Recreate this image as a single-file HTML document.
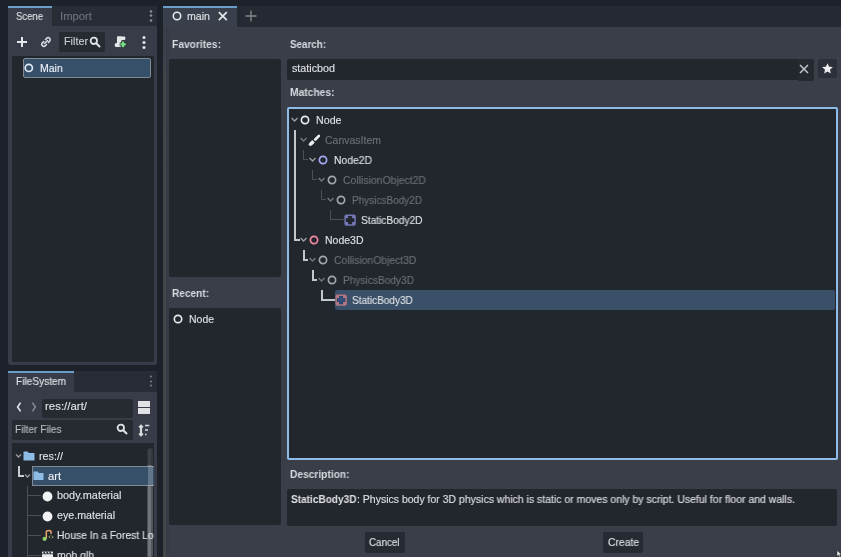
<!DOCTYPE html>
<html><head><meta charset="utf-8"><style>
html,body{margin:0;padding:0;}
body{width:841px;height:557px;overflow:hidden;position:relative;background:#1d2129;font-family:"Liberation Sans",sans-serif;}
body>div,body>svg{position:absolute;}
body>div{will-change:transform;}
</style></head><body>
<div style="left:8px;top:6px;width:149px;height:21px;background:#282c34;"></div>
<div style="left:8px;top:6px;width:44px;height:21px;background:#373c48;"></div>
<div style="left:8px;top:6px;width:44px;height:2px;background:#6c9fc8;"></div>
<div style="left:16px;top:7.86px;font-size:10.5px;line-height:17px;color:#dfe1e5;transform:scaleX(0.9069);transform-origin:0 0;white-space:pre;-webkit-text-stroke:0.12px #dfe1e5;">Scene</div>
<div style="left:59.7px;top:7.86px;font-size:10.5px;line-height:17px;color:#6e737b;transform:scaleX(1.0755);transform-origin:0 0;white-space:pre;-webkit-text-stroke:0.12px #6e737b;">Import</div>
<svg style="left:149px;top:9.7px;" width="4" height="4" viewBox="0 0 4 4"><circle cx="2" cy="1.5" r="1.3" fill="#8a8e95"/></svg>
<svg style="left:149px;top:14.3px;" width="4" height="4" viewBox="0 0 4 4"><circle cx="2" cy="1.5" r="1.3" fill="#8a8e95"/></svg>
<svg style="left:149px;top:18.9px;" width="4" height="4" viewBox="0 0 4 4"><circle cx="2" cy="1.5" r="1.3" fill="#8a8e95"/></svg>
<div style="left:8px;top:26px;width:149px;height:339px;background:#373c48;border-radius:0 0 3px 3px;"></div>
<svg style="left:16px;top:36px;" width="12" height="12" viewBox="0 0 12 12"><path d="M6 1v10M1 6h10" stroke="#e6e8eb" stroke-width="2"/></svg>
<svg style="left:40px;top:36px;" width="12" height="12" viewBox="0 0 12 12"><path d="M5.5 3.5l1.2-1.2a2 2 0 0 1 2.9 2.9L8.4 6.4M6.5 8.5L5.3 9.7a2 2 0 0 1-2.9-2.9L3.6 5.6M4.5 7.5l3-3" stroke="#e0e2e6" stroke-width="1.5" fill="none" stroke-linecap="round"/></svg>
<div style="left:59px;top:32px;width:46px;height:20px;background:#262a31;border-radius:2px;"></div>
<div style="left:63.5px;top:33.36px;font-size:10.5px;line-height:17px;color:#c9ccd0;transform:scaleX(1.0287);transform-origin:0 0;white-space:pre;-webkit-text-stroke:0.12px #c9ccd0;">Filter</div>
<svg style="left:89px;top:36px;" width="12" height="12" viewBox="0 0 12 12"><circle cx="4.8" cy="4.8" r="3.2" stroke="#e0e2e6" stroke-width="1.8" fill="none"/><path d="M7.2 7.2l3.3 3.3" stroke="#e0e2e6" stroke-width="2" stroke-linecap="round"/></svg>
<svg style="left:113px;top:34px;" width="16" height="16" viewBox="0 0 16 16"><rect x="4" y="2.5" width="8.4" height="3.6" rx="1.3" fill="#e6e8eb"/><rect x="4" y="2.5" width="4.6" height="10.5" fill="#e6e8eb"/><rect x="1.8" y="9" width="6.6" height="4" rx="1.6" fill="#e6e8eb"/><path d="M10.1 7v6.8M6.7 10.4h6.8" stroke="#1e3326" stroke-width="3.6"/><path d="M10.1 7.6v5.6M7.3 10.4h5.6" stroke="#79dc8a" stroke-width="2.2"/></svg>
<svg style="left:142px;top:35.7px;" width="4" height="4" viewBox="0 0 4 4"><circle cx="2" cy="1.5" r="1.5" fill="#e6e8eb"/></svg>
<svg style="left:142px;top:40.7px;" width="4" height="4" viewBox="0 0 4 4"><circle cx="2" cy="1.5" r="1.5" fill="#e6e8eb"/></svg>
<svg style="left:142px;top:45.7px;" width="4" height="4" viewBox="0 0 4 4"><circle cx="2" cy="1.5" r="1.5" fill="#e6e8eb"/></svg>
<div style="left:12px;top:56px;width:142px;height:306px;background:#22262d;border-radius:2px;"></div>
<div style="left:23px;top:58px;width:128px;height:20px;background:#37506a;border:1px solid #808a96;box-sizing:border-box;border-radius:2px;"></div>
<svg style="left:24px;top:63px;" width="10" height="10" viewBox="0 0 10 10"><circle cx="4.8" cy="4.9" r="3.6" stroke="#dce8f3" stroke-width="1.7" fill="none"/></svg>
<div style="left:39.6px;top:59.86px;font-size:10.5px;line-height:17px;color:#f0f4fa;transform:scaleX(0.9931);transform-origin:0 0;white-space:pre;-webkit-text-stroke:0.12px #f0f4fa;">Main</div>
<div style="left:8px;top:371px;width:149px;height:21px;background:#282c34;"></div>
<div style="left:8px;top:371px;width:66px;height:21px;background:#373c48;"></div>
<div style="left:8px;top:371px;width:66px;height:2px;background:#6c9fc8;"></div>
<div style="left:16px;top:373.36px;font-size:10.5px;line-height:17px;color:#dfe1e5;transform:scaleX(0.9629);transform-origin:0 0;white-space:pre;-webkit-text-stroke:0.12px #dfe1e5;">FileSystem</div>
<svg style="left:149px;top:375.1px;" width="4" height="4" viewBox="0 0 4 4"><circle cx="2" cy="1.5" r="1.1" fill="#767a81"/></svg>
<svg style="left:149px;top:379.6px;" width="4" height="4" viewBox="0 0 4 4"><circle cx="2" cy="1.5" r="1.1" fill="#767a81"/></svg>
<svg style="left:149px;top:384.3px;" width="4" height="4" viewBox="0 0 4 4"><circle cx="2" cy="1.5" r="1.1" fill="#767a81"/></svg>
<div style="left:8px;top:392px;width:149px;height:165px;background:#373c48;"></div>
<svg style="left:14px;top:400px;" width="10" height="14" viewBox="0 0 10 14"><path d="M6.6 2.6L3.6 7l3 4.4" stroke="#e6e8eb" stroke-width="1.6" fill="none"/></svg>
<svg style="left:29px;top:400px;" width="10" height="14" viewBox="0 0 10 14"><path d="M3.4 2.6L6.4 7l-3 4.4" stroke="#8a8e95" stroke-width="1.4" fill="none"/></svg>
<div style="left:42px;top:398.5px;width:91px;height:18.5px;background:#262a31;border-radius:2px;"></div>
<div style="left:45px;top:398.36px;font-size:10.5px;line-height:17px;color:#dfe1e5;transform:scaleX(1.0908);transform-origin:0 0;white-space:pre;-webkit-text-stroke:0.12px #dfe1e5;">res://art/</div>
<div style="left:138px;top:401px;width:12px;height:5.5px;background:#e0e2e6;"></div>
<div style="left:138px;top:408px;width:12px;height:5.5px;background:#e0e2e6;"></div>
<div style="left:12px;top:420px;width:121px;height:20px;background:#262a31;border-radius:2px;"></div>
<div style="left:15px;top:420.86px;font-size:10.5px;line-height:17px;color:#b8bbc0;transform:scaleX(0.9604);transform-origin:0 0;white-space:pre;-webkit-text-stroke:0.12px #b8bbc0;">Filter Files</div>
<svg style="left:116px;top:423px;" width="12" height="12" viewBox="0 0 12 12"><circle cx="4.8" cy="4.8" r="3.2" stroke="#e0e2e6" stroke-width="1.8" fill="none"/><path d="M7.2 7.2l3.3 3.3" stroke="#e0e2e6" stroke-width="2" stroke-linecap="round"/></svg>
<svg style="left:137px;top:422px;" width="14" height="16" viewBox="0 0 14 16"><path d="M4 4.2v8.6" stroke="#d8dadf" stroke-width="2.2"/><path d="M2.1 5.4L4 3.4 5.9 5.4M2.1 11.6L4 13.6 5.9 11.6" stroke="#d8dadf" stroke-width="1.7" fill="none"/><path d="M8 3.5h4.3M8 8h3M8 12.5h1.5" stroke="#d8dadf" stroke-width="1.4"/></svg>
<div style="left:12px;top:443px;width:142px;height:114px;background:#22262d;"></div>
<div style="left:147px;top:449px;width:4px;height:108px;background:#2c3038;"></div>
<div style="left:147px;top:465px;width:4px;height:92px;background:#4a4f57;"></div>
<svg style="left:15px;top:453px;" width="7" height="6" viewBox="0 0 7 6"><path d="M1 1.5l2.5 2.5 2.5-2.5" stroke="#9a9ea4" stroke-width="1.3" fill="none"/></svg>
<svg style="left:23px;top:450px;" width="12" height="11" viewBox="0 0 12 11"><path d="M0.5 1.5h4l1.5 1.5h5.5v7.5h-11z" fill="#8dbde6"/></svg>
<div style="left:39px;top:447.86px;font-size:10.5px;line-height:17px;color:#dfe1e5;transform:scaleX(1.0284);transform-origin:0 0;white-space:pre;-webkit-text-stroke:0.12px #dfe1e5;">res://</div>
<div style="left:32px;top:466px;width:122px;height:20px;background:#37506a;border:1px solid #808a96;border-right:none;box-sizing:border-box;"></div>
<div style="left:18px;top:466px;width:2px;height:11px;background:#c8cbd0;"></div>
<div style="left:18px;top:475px;width:5.5px;height:2px;background:#c8cbd0;"></div>
<svg style="left:24px;top:473px;" width="7" height="6" viewBox="0 0 7 6"><path d="M1 1.5l2.5 2.5 2.5-2.5" stroke="#9a9ea4" stroke-width="1.3" fill="none"/></svg>
<svg style="left:33px;top:470px;" width="11" height="11" viewBox="0 0 11 11"><path d="M0.5 1.5h4l1.5 1.5h4.5v7h-10z" fill="#8dbde6"/></svg>
<div style="left:48px;top:467.86px;font-size:10.5px;line-height:17px;color:#eef2f6;transform:scaleX(1.0610);transform-origin:0 0;white-space:pre;-webkit-text-stroke:0.12px #eef2f6;">art</div>
<div style="left:27px;top:486px;width:1px;height:71px;background:#4a4e55;"></div>
<div style="left:28px;top:495px;width:13px;height:1px;background:#4a4e55;"></div>
<svg style="left:42px;top:490.6px;" width="11" height="11" viewBox="0 0 11 11"><circle cx="5.5" cy="5.5" r="4.9" fill="#f2f3f5"/></svg>
<div style="left:57px;top:487.46px;font-size:10.5px;line-height:17px;color:#dfe1e5;transform:scaleX(1.0362);transform-origin:0 0;white-space:pre;-webkit-text-stroke:0.12px #dfe1e5;">body.material</div>
<div style="left:28px;top:515px;width:13px;height:1px;background:#4a4e55;"></div>
<svg style="left:42px;top:510.6px;" width="11" height="11" viewBox="0 0 11 11"><circle cx="5.5" cy="5.5" r="4.9" fill="#f2f3f5"/></svg>
<div style="left:57px;top:507.46px;font-size:10.5px;line-height:17px;color:#dfe1e5;transform:scaleX(1.0142);transform-origin:0 0;white-space:pre;-webkit-text-stroke:0.12px #dfe1e5;">eye.material</div>
<div style="left:28px;top:535px;width:13px;height:1px;background:#4a4e55;"></div>
<svg style="left:42px;top:528.5px;" width="12" height="12" viewBox="0 0 12 12"><path d="M4.3 9.5V2.3c1.5-.9 3.2-.9 4.6-.2l.3 2.8" stroke="#eda56e" stroke-width="1.5" fill="none"/><circle cx="2.6" cy="9.8" r="2.1" fill="#8fd46a"/><path d="M8.2 6.6l-1.3 1.3 1.3 1.3M9.8 6.6l1.3 1.3-1.3 1.3" stroke="#a6c47a" stroke-width="0.9" fill="none"/></svg>
<div style="left:57px;top:527.36px;font-size:10.5px;line-height:17px;color:#dfe1e5;transform:scaleX(0.9842);transform-origin:0 0;white-space:pre;-webkit-text-stroke:0.12px #dfe1e5;">House In a Forest Lo</div>
<div style="left:28px;top:555px;width:13px;height:1px;background:#4a4e55;"></div>
<svg style="left:42px;top:551.4px;" width="12" height="12" viewBox="0 0 12 12"><rect x="0" y="0.6" width="11" height="10" fill="#e6e8eb"/><path d="M1.5 0.6l1.5 2M4.5 0.6l1.5 2M7.5 0.6l1.5 2" stroke="#22262d" stroke-width="1.2"/><path d="M0 2.8h11" stroke="#22262d" stroke-width="0.8"/></svg>
<div style="left:57px;top:547.26px;font-size:10.5px;line-height:17px;color:#dfe1e5;transform:scaleX(0.9906);transform-origin:0 0;white-space:pre;-webkit-text-stroke:0.12px #dfe1e5;">mob.glb</div>
<div style="left:154px;top:443px;width:3px;height:114px;background:#373c48;"></div>
<div style="left:147.5px;top:448px;width:4.5px;height:17px;background:rgba(255,255,255,0.08);border-radius:2px 2px 0 0;"></div>
<div style="left:147.5px;top:465px;width:4.5px;height:92px;background:rgba(255,255,255,0.22);border-radius:2px;"></div>
<div style="left:157px;top:0px;width:6px;height:557px;background:#1d2129;"></div>
<div style="left:163px;top:6px;width:678px;height:21px;background:#252a32;"></div>
<div style="left:163px;top:6px;width:74px;height:21px;background:#3a404b;"></div>
<div style="left:163px;top:6px;width:74px;height:2px;background:#6c9fc8;"></div>
<svg style="left:171px;top:10px;" width="12" height="12" viewBox="0 0 12 12"><circle cx="6" cy="6" r="3.7" stroke="#e6e8eb" stroke-width="1.6" fill="none"/></svg>
<div style="left:186.5px;top:7.86px;font-size:10.5px;line-height:17px;color:#dfe1e5;transform:scaleX(1.0107);transform-origin:0 0;white-space:pre;-webkit-text-stroke:0.12px #dfe1e5;">main</div>
<svg style="left:217px;top:11px;" width="12" height="10" viewBox="0 0 12 10"><path d="M1.8 1.2l8 8M9.8 1.2l-8 8" stroke="#e6e8eb" stroke-width="1.7"/></svg>
<svg style="left:245px;top:10px;" width="12" height="12" viewBox="0 0 12 12"><path d="M6 0.5v11M0.5 6h11" stroke="#85898f" stroke-width="1.3"/></svg>
<div style="left:163px;top:27px;width:678px;height:530px;background:#393e49;"></div>
<div style="left:163px;top:50px;width:3px;height:507px;background:linear-gradient(#393e49,#40454a 20px,#42474a);"></div>
<div style="left:166px;top:27px;width:3px;height:530px;background:#373b47;"></div>
<div style="left:172px;top:36.16px;font-size:10.5px;line-height:17px;color:#d7dade;font-weight:bold;transform:scaleX(0.9765);transform-origin:0 0;white-space:pre;-webkit-text-stroke:0px #d7dade;">Favorites:</div>
<div style="left:169px;top:59px;width:112px;height:218px;background:#22262d;border-radius:2px;"></div>
<div style="left:172px;top:284.86px;font-size:10.5px;line-height:17px;color:#d7dade;font-weight:bold;transform:scaleX(0.9609);transform-origin:0 0;white-space:pre;-webkit-text-stroke:0px #d7dade;">Recent:</div>
<div style="left:169px;top:308px;width:112px;height:217px;background:#22262d;border-radius:2px;"></div>
<svg style="left:173px;top:314px;" width="10" height="10" viewBox="0 0 10 10"><circle cx="5" cy="5" r="3.7" stroke="#e6e8eb" stroke-width="1.7" fill="none"/></svg>
<div style="left:188.5px;top:310.86px;font-size:10.5px;line-height:17px;color:#dfe1e5;transform:scaleX(0.9960);transform-origin:0 0;white-space:pre;-webkit-text-stroke:0.12px #dfe1e5;">Node</div>
<div style="left:290px;top:36.16px;font-size:10.5px;line-height:17px;color:#d7dade;font-weight:bold;transform:scaleX(0.9347);transform-origin:0 0;white-space:pre;-webkit-text-stroke:0px #d7dade;">Search:</div>
<div style="left:287px;top:59px;width:526px;height:21px;background:#22262d;border-radius:2px;"></div>
<div style="left:291.5px;top:60.36px;font-size:10.5px;line-height:17px;color:#dfe1e5;transform:scaleX(1.0232);transform-origin:0 0;white-space:pre;-webkit-text-stroke:0.12px #dfe1e5;">staticbod</div>
<div style="left:797.5px;top:59px;width:15.5px;height:22px;background:#252930;border-radius:0 2px 2px 0;"></div>
<svg style="left:798.5px;top:64.3px;" width="10" height="10" viewBox="0 0 10 10"><path d="M1 1l8 8M9 1l-8 8" stroke="#c3c6cb" stroke-width="1.5"/></svg>
<div style="left:818px;top:59px;width:19px;height:19px;background:#2b2f37;border-radius:2px;"></div>
<svg style="left:821px;top:62px;" width="13" height="13" viewBox="0 0 13 13"><path d="M6.5 1.2l1.6 3.5 3.8.4-2.9 2.6.8 3.8-3.3-1.9-3.3 1.9.8-3.8L1.1 5.1l3.8-.4z" fill="#eceef1"/></svg>
<div style="left:290px;top:84.16px;font-size:10.5px;line-height:17px;color:#d7dade;font-weight:bold;transform:scaleX(0.9779);transform-origin:0 0;white-space:pre;-webkit-text-stroke:0px #d7dade;">Matches:</div>
<div style="left:287px;top:107px;width:551px;height:353px;background:#22262d;border:2px solid #8ebbe8;box-sizing:border-box;border-radius:2px;"></div>
<div style="left:290.2px;top:465.86px;font-size:10.5px;line-height:17px;color:#d7dade;font-weight:bold;transform:scaleX(0.9714);transform-origin:0 0;white-space:pre;-webkit-text-stroke:0px #d7dade;">Description:</div>
<div style="left:287px;top:489px;width:550px;height:36.5px;background:#22262d;border-radius:2px;"></div>
<div style="left:290.6px;top:490.86px;font-size:10.5px;line-height:17px;color:#dfe1e5;font-weight:bold;transform:scaleX(0.9595);transform-origin:0 0;white-space:pre;-webkit-text-stroke:0px #dfe1e5;">StaticBody3D</div>
<div style="left:356.5px;top:490.86px;font-size:10.5px;line-height:17px;color:#dfe1e5;transform:scaleX(0.9982);transform-origin:0 0;white-space:pre;-webkit-text-stroke:0.12px #dfe1e5;">: Physics body for 3D physics which is static or moves only by script. Useful for floor and walls.</div>
<div style="left:365px;top:532px;width:40px;height:20.5px;background:#262a32;border-radius:2px;"></div>
<div style="left:369px;top:533.86px;font-size:10.5px;line-height:17px;color:#dfe1e5;transform:scaleX(0.9332);transform-origin:0 0;white-space:pre;-webkit-text-stroke:0.12px #dfe1e5;">Cancel</div>
<div style="left:603px;top:532px;width:40px;height:20.5px;background:#262a32;border-radius:2px;"></div>
<div style="left:607.5px;top:533.86px;font-size:10.5px;line-height:17px;color:#dfe1e5;transform:scaleX(0.9837);transform-origin:0 0;white-space:pre;-webkit-text-stroke:0.12px #dfe1e5;">Create</div>
<div style="left:335px;top:290px;width:500px;height:20px;background:#3a5068;border-radius:2px;"></div>
<div style="left:294px;top:130px;width:2px;height:111px;background:#c3c6cb;"></div>
<div style="left:294px;top:239px;width:6px;height:2px;background:#c3c6cb;"></div>
<div style="left:303px;top:250px;width:2px;height:11px;background:#c3c6cb;"></div>
<div style="left:303px;top:259px;width:5px;height:2px;background:#c3c6cb;"></div>
<div style="left:312px;top:270px;width:2px;height:11px;background:#c3c6cb;"></div>
<div style="left:312px;top:279px;width:5px;height:2px;background:#c3c6cb;"></div>
<div style="left:321px;top:290px;width:2px;height:11px;background:#c3c6cb;"></div>
<div style="left:321px;top:299px;width:14px;height:2px;background:#c3c6cb;"></div>
<div style="left:303px;top:150px;width:1px;height:10px;background:#4b4f56;"></div>
<div style="left:303px;top:159px;width:5px;height:1px;background:#4b4f56;"></div>
<div style="left:312px;top:170px;width:1px;height:10px;background:#4b4f56;"></div>
<div style="left:312px;top:179px;width:5px;height:1px;background:#4b4f56;"></div>
<div style="left:321px;top:190px;width:1px;height:10px;background:#4b4f56;"></div>
<div style="left:321px;top:199px;width:5px;height:1px;background:#4b4f56;"></div>
<div style="left:330px;top:210px;width:1px;height:10px;background:#4b4f56;"></div>
<div style="left:330px;top:219px;width:14px;height:1px;background:#4b4f56;"></div>
<svg style="left:291px;top:117px;" width="8" height="7" viewBox="0 0 8 7"><path d="M0.6 1.0L3.55 4.1L6.5 1.0" stroke="#9a9ea4" stroke-width="1.4" fill="none"/></svg>
<svg style="left:299.8px;top:115px;" width="10" height="10" viewBox="0 0 10 10"><circle cx="5" cy="5" r="3.65" stroke="#e6e8eb" stroke-width="1.65" fill="none"/></svg>
<div style="left:316.0px;top:111.86px;font-size:10.5px;line-height:17px;color:#dfe1e5;transform:scaleX(1.0159);transform-origin:0 0;white-space:pre;-webkit-text-stroke:0.12px #dfe1e5;">Node</div>
<svg style="left:300px;top:137px;" width="8" height="7" viewBox="0 0 8 7"><path d="M0.6 1.0L3.55 4.1L6.5 1.0" stroke="#74787e" stroke-width="1.4" fill="none"/></svg>
<svg style="left:307.5px;top:134px;" width="12" height="12" viewBox="0 0 12 12"><path d="M10.9 1.9L7.3 5.5" stroke="#eceef1" stroke-width="2.7" stroke-linecap="round"/><path d="M5.5 7.3L2.6 10.2" stroke="#eceef1" stroke-width="3.5"/><circle cx="2.4" cy="10.3" r="1.6" fill="#eceef1"/></svg>
<div style="left:325.0px;top:131.86px;font-size:10.5px;line-height:17px;color:#6c7077;white-space:pre;-webkit-text-stroke:0.12px #6c7077;">CanvasItem</div>
<svg style="left:309px;top:157px;" width="8" height="7" viewBox="0 0 8 7"><path d="M0.6 1.0L3.55 4.1L6.5 1.0" stroke="#9a9ea4" stroke-width="1.4" fill="none"/></svg>
<svg style="left:318px;top:155px;" width="10" height="10" viewBox="0 0 10 10"><circle cx="5" cy="5" r="3.65" stroke="#a3aaf2" stroke-width="1.65" fill="none"/></svg>
<div style="left:334.1px;top:151.86px;font-size:10.5px;line-height:17px;color:#dfe1e5;transform:scaleX(0.9865);transform-origin:0 0;white-space:pre;-webkit-text-stroke:0.12px #dfe1e5;">Node2D</div>
<svg style="left:318px;top:177px;" width="8" height="7" viewBox="0 0 8 7"><path d="M0.6 1.0L3.55 4.1L6.5 1.0" stroke="#74787e" stroke-width="1.4" fill="none"/></svg>
<svg style="left:326.6px;top:175px;" width="10" height="10" viewBox="0 0 10 10"><circle cx="5" cy="5" r="3.65" stroke="#a3a6ab" stroke-width="1.65" fill="none"/></svg>
<div style="left:342.6px;top:171.86px;font-size:10.5px;line-height:17px;color:#6c7077;transform:scaleX(0.9946);transform-origin:0 0;white-space:pre;-webkit-text-stroke:0.12px #6c7077;">CollisionObject2D</div>
<svg style="left:327px;top:197px;" width="8" height="7" viewBox="0 0 8 7"><path d="M0.6 1.0L3.55 4.1L6.5 1.0" stroke="#74787e" stroke-width="1.4" fill="none"/></svg>
<svg style="left:335.7px;top:195px;" width="10" height="10" viewBox="0 0 10 10"><circle cx="5" cy="5" r="3.65" stroke="#a3a6ab" stroke-width="1.65" fill="none"/></svg>
<div style="left:352.0px;top:191.86px;font-size:10.5px;line-height:17px;color:#6c7077;transform:scaleX(0.9520);transform-origin:0 0;white-space:pre;-webkit-text-stroke:0.12px #6c7077;">PhysicsBody2D</div>
<svg style="left:344.2px;top:214px;" width="12" height="12" viewBox="0 0 12 12"><rect x="0.4" y="0.4" width="11.4" height="11.4" rx="2" fill="#7279b6"/><path d="M1.9 4.2h8.4v3.8H1.9zM4.1 1.9h4v8.4h-4z" fill="#22262d"/></svg>
<div style="left:360.6px;top:211.86px;font-size:10.5px;line-height:17px;color:#dfe1e5;transform:scaleX(0.9668);transform-origin:0 0;white-space:pre;-webkit-text-stroke:0.12px #dfe1e5;">StaticBody2D</div>
<svg style="left:300px;top:237px;" width="8" height="7" viewBox="0 0 8 7"><path d="M0.6 1.0L3.55 4.1L6.5 1.0" stroke="#9a9ea4" stroke-width="1.4" fill="none"/></svg>
<svg style="left:309px;top:235px;" width="10" height="10" viewBox="0 0 10 10"><circle cx="5" cy="5" r="3.65" stroke="#f08aa2" stroke-width="1.65" fill="none"/></svg>
<div style="left:325.0px;top:231.86px;font-size:10.5px;line-height:17px;color:#dfe1e5;white-space:pre;-webkit-text-stroke:0.12px #dfe1e5;">Node3D</div>
<svg style="left:309px;top:257px;" width="8" height="7" viewBox="0 0 8 7"><path d="M0.6 1.0L3.55 4.1L6.5 1.0" stroke="#74787e" stroke-width="1.4" fill="none"/></svg>
<svg style="left:318px;top:255px;" width="10" height="10" viewBox="0 0 10 10"><circle cx="5" cy="5" r="3.65" stroke="#a3a6ab" stroke-width="1.65" fill="none"/></svg>
<div style="left:334.1px;top:251.86px;font-size:10.5px;line-height:17px;color:#6c7077;transform:scaleX(0.9886);transform-origin:0 0;white-space:pre;-webkit-text-stroke:0.12px #6c7077;">CollisionObject3D</div>
<svg style="left:318px;top:277px;" width="8" height="7" viewBox="0 0 8 7"><path d="M0.6 1.0L3.55 4.1L6.5 1.0" stroke="#74787e" stroke-width="1.4" fill="none"/></svg>
<svg style="left:326.6px;top:275px;" width="10" height="10" viewBox="0 0 10 10"><circle cx="5" cy="5" r="3.65" stroke="#a3a6ab" stroke-width="1.65" fill="none"/></svg>
<div style="left:342.6px;top:271.86px;font-size:10.5px;line-height:17px;color:#6c7077;transform:scaleX(0.9656);transform-origin:0 0;white-space:pre;-webkit-text-stroke:0.12px #6c7077;">PhysicsBody3D</div>
<svg style="left:335px;top:294px;" width="12" height="12" viewBox="0 0 12 12"><rect x="0.4" y="0.4" width="11.4" height="11.4" rx="2" fill="#b47784"/><path d="M1.9 4.2h8.4v3.8H1.9zM4.1 1.9h4v8.4h-4z" fill="#2a4468"/><path d="M3 5h6.2v2.2H3zM4.9 3h2.4v6.2H4.9z" fill="#33507e"/></svg>
<div style="left:352.1px;top:291.86px;font-size:10.5px;line-height:17px;color:#dfe1e5;transform:scaleX(0.9558);transform-origin:0 0;white-space:pre;-webkit-text-stroke:0.12px #dfe1e5;">StaticBody3D</div>
<svg style="left:836px;top:550px;" width="5" height="7" viewBox="0 0 5 7"><path d="M1 0.5v6l1.5-1.4 1.2 1.9 1-.5-1.1-1.9h2z" fill="#f4f4f4" stroke="#222" stroke-width="0.5"/></svg>
</body></html>
